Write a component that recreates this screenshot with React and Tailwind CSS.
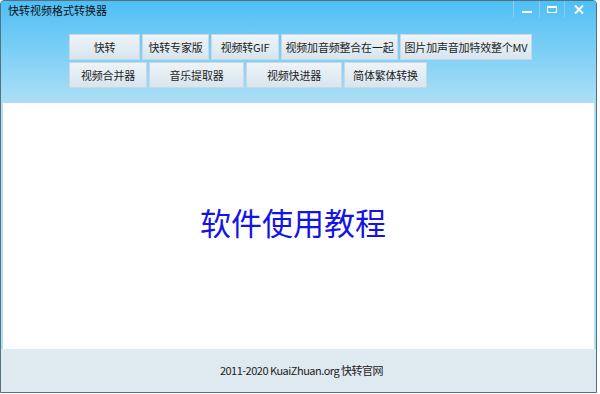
import React from 'react';

const row1 = [
  { label: '快转', w: 'w-[71px]' },
  { label: '快转专家版', w: 'w-[67px]' },
  { label: '视频转GIF', w: 'w-[68px]' },
  { label: '视频加音频整合在一起', w: 'w-[117px]' },
  { label: '图片加声音加特效整个MV', w: 'w-[132px]' },
];

const row2 = [
  { label: '视频合并器', w: 'w-[78px]' },
  { label: '音乐提取器', w: 'w-[95px]' },
  { label: '视频快进器', w: 'w-[96px]' },
  { label: '简体繁体转换', w: 'w-[83px]' },
];

function ToolButton({ label, w }) {
  return (
    <button
      className={`${w} h-[26px] shrink-0 flex items-center justify-center bg-gradient-to-b from-[#eef4f8] to-[#d8e5ee] border border-[#c9d8e2] text-[11px] text-[#1e1e1e] tracking-[-0.2px] whitespace-nowrap px-0`}
    >
      {label}
    </button>
  );
}

export default function App() {
  return (
    <div
      className="w-[600px] h-[394px] overflow-hidden bg-white"
      style={{ fontFamily: '"Noto Sans CJK SC", "Liberation Sans", sans-serif' }}
    >
      <div className="w-[597px] h-[393px] flex flex-col border border-[#55707f] rounded-t-[4px] bg-[#aee0f6] overflow-hidden">
        {/* header: title bar + tool buttons */}
        <div className="h-[102px] shrink-0 bg-gradient-to-b from-[#4dbff5] via-[#7dcff5] to-[#addff6]">
          <div className="h-[18px] flex items-start justify-between">
            <span className="pl-[7px] pt-[3px] text-[11px] leading-[13px] text-[#111]">快转视频格式转换器</span>
            <div className="flex h-[17px] mr-[3px]">
              <div className="w-[26px] h-full border-l border-[#8fcbe8] flex items-center justify-center">
                <div className="w-[10px] h-[2px] bg-white mt-[4px]" />
              </div>
              <div className="w-[25px] h-full border-l border-[#8fcbe8] flex items-center justify-center">
                <div className="w-[10px] h-[7px] border border-white border-t-2" />
              </div>
              <div className="w-[29px] h-full border-l border-[#8fcbe8] flex items-center justify-center">
                <svg width="10" height="9" viewBox="0 0 10 9" className="mb-[1px]">
                  <path d="M1 0.5 L9 8.5 M9 0.5 L1 8.5" stroke="white" strokeWidth="2" />
                </svg>
              </div>
            </div>
          </div>

          <div className="pl-[68px] pt-[15px] flex flex-col gap-[2px]">
            <div className="flex gap-[2px]">
              {row1.map((b) => (
                <ToolButton key={b.label} {...b} />
              ))}
            </div>
            <div className="flex gap-[2px]">
              {row2.map((b) => (
                <ToolButton key={b.label} {...b} />
              ))}
            </div>
          </div>
        </div>

        {/* content */}
        <div className="mx-[2px] h-[246px] shrink-0 bg-white flex items-center justify-center pb-[10px] pr-[11px]">
          <span className="text-[31px] leading-none text-[#1414e4]">软件使用教程</span>
        </div>

        {/* footer */}
        <div className="flex-1 bg-[#dfe9f0] flex items-center justify-center pl-[6px]">
          <span className="text-[11px] text-[#222] tracking-[-0.5px]">2011-2020 KuaiZhuan.org 快转官网</span>
        </div>
      </div>
    </div>
  );
}
